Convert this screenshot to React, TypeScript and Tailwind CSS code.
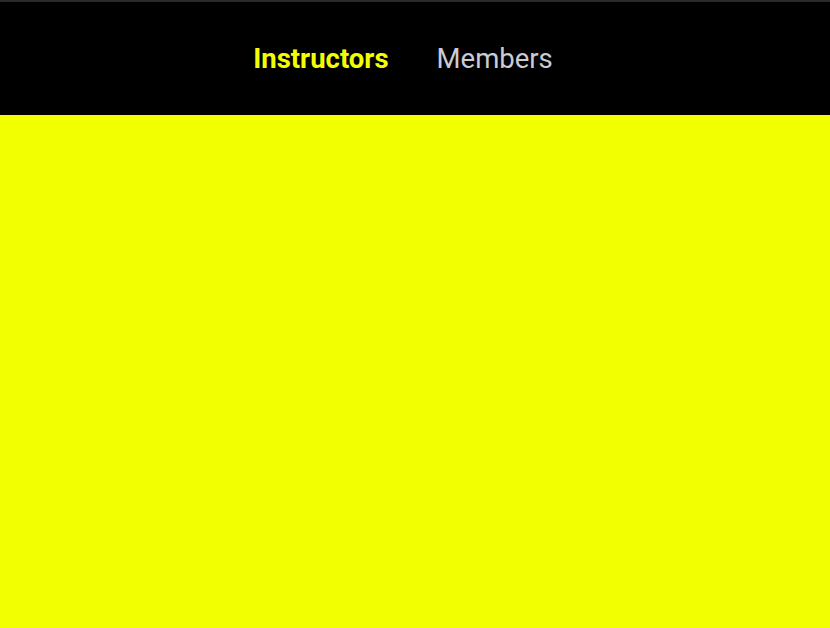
export default function App() {
  return (
    <div className="h-[628px] w-full flex flex-col bg-[#f2ff00] font-['Roboto',sans-serif]">
      <header className="h-[115px] shrink-0 bg-black border-t-2 border-[#2a2a2a] flex items-center justify-center gap-12 pr-6">
        <a href="#" className="text-[27.5px] leading-none font-bold text-[#f2ff00]">
          Instructors
        </a>
        <a href="#" className="text-[27.5px] leading-none text-[#c9ccd3]">
          Members
        </a>
      </header>
      <main className="flex-1" />
    </div>
  );
}
